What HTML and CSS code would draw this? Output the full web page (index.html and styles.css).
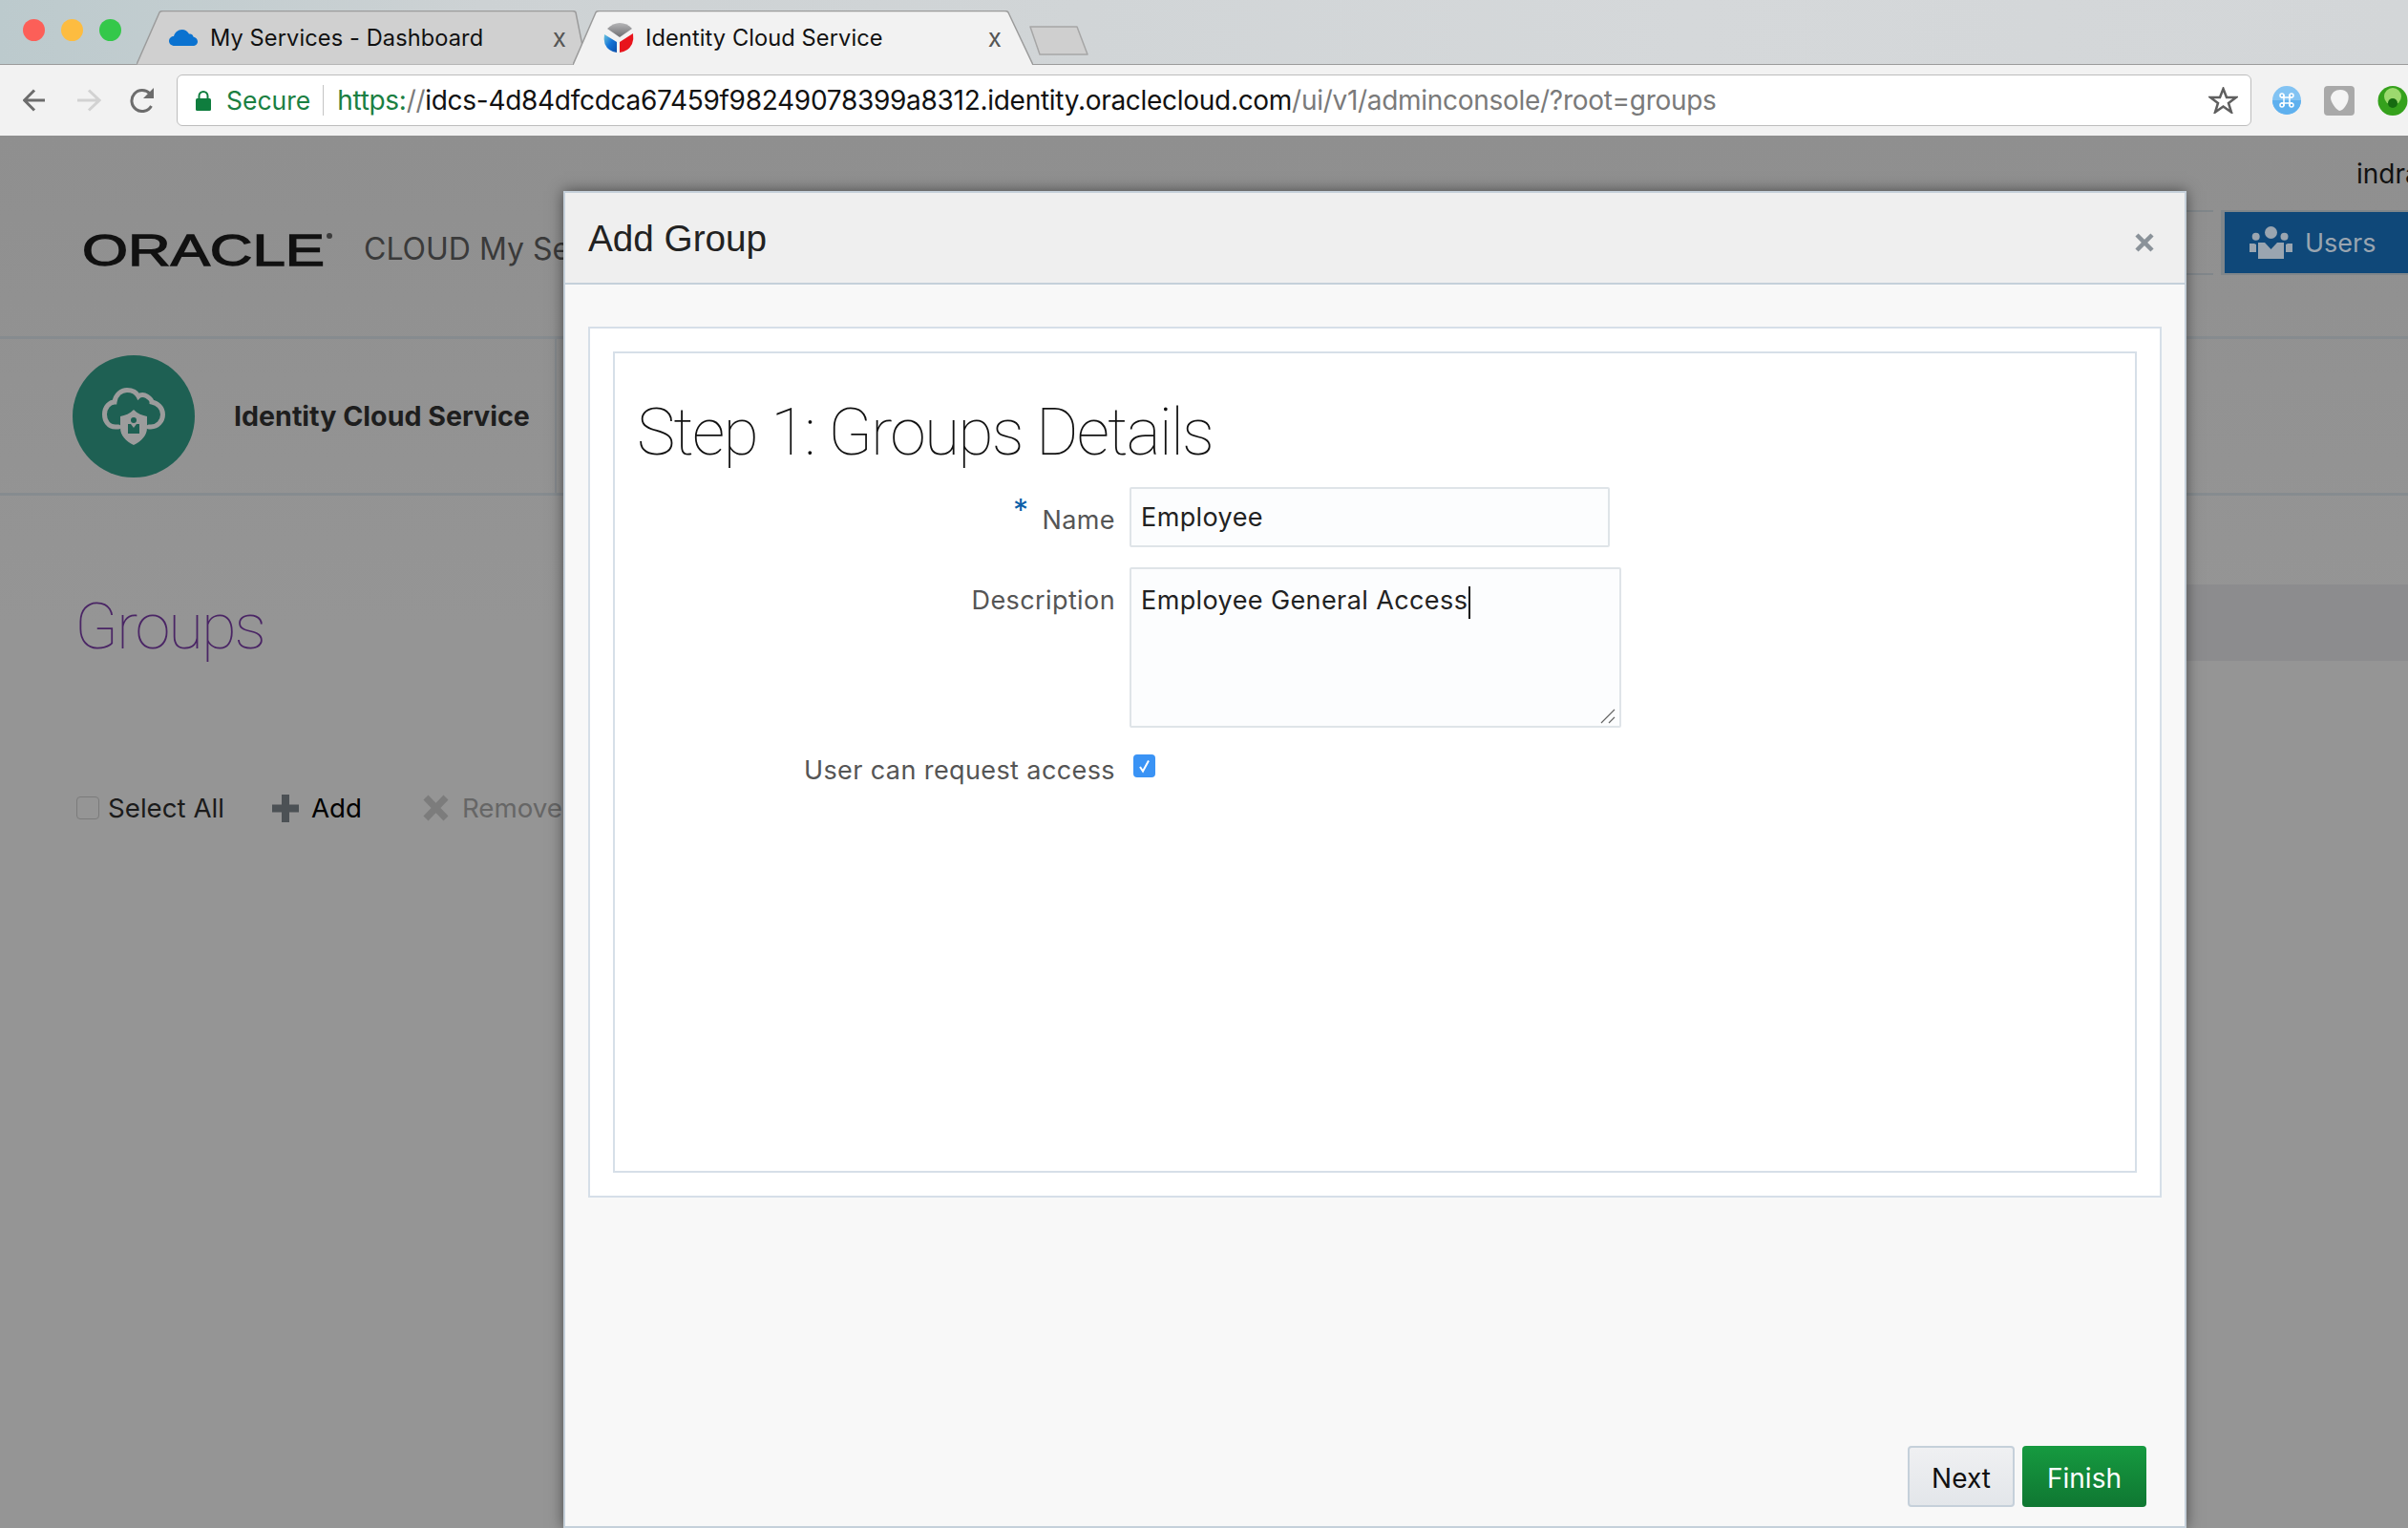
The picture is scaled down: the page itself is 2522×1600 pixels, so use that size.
FILE: index.html
```html
<!DOCTYPE html>
<html lang="en">
<head>
    <meta charset="UTF-8">
    <meta name="viewport" content="width=device-width, initial-scale=1.0">
    <title>Add Group</title>
    <link rel="stylesheet" href="styles.css">
</head>
<body>
    <!-- Browser window chrome -->
    <div class="tabstrip">
        <div class="lights">
            <span class="light light-red"></span>
            <span class="light light-yellow"></span>
            <span class="light light-green"></span>
        </div>
        <div class="tab tab-back">
            <svg class="tab-shape" viewBox="0 0 471 57" preserveAspectRatio="none">
                <path d="M0 56.5 L24 2 Q25 0.5 28 0.5 H456 Q459 0.5 460 2 L471 56.5" fill="#d0d0d0" stroke="#9b9b9b" stroke-width="1.5"/>
            </svg>
            <svg class="tab-icon" width="30" height="17" viewBox="0 0 30 17">
                <path d="M6 17 C2 17 0 14.5 0 12 C0 9 2.5 7 5 7 C6 3 9.500 0 13.500 0 C17 0 19.500 2 21 4.500 C23 4 25 5 25.500 7.500 C28 8 30 10 30 12.500 C30 15 28 17 25 17 Z" fill="#0a72d0"/>
            </svg>
            <span class="tab-title">My Services - Dashboard</span>
            <span class="tab-close">x</span>
        </div>
        <div class="tab tab-active">
            <svg class="tab-shape" viewBox="0 0 482 57" preserveAspectRatio="none">
                <path d="M0 57 L24 2 Q25 0.500 28 0.500 H452 Q455 0.500 456 2 L482 57" fill="#f2f2f2" stroke="#9b9b9b" stroke-width="1.500"/>
            </svg>
            <svg class="tab-icon" width="32" height="32" viewBox="0 0 32 32">
                <defs>
                    <linearGradient id="fav-grey" x1="0" y1="0" x2="0" y2="1">
                        <stop offset="0" stop-color="#b5b5b7"/>
                        <stop offset="1" stop-color="#6f6f72"/>
                    </linearGradient>
                    <linearGradient id="fav-blue" x1="0" y1="0" x2="1" y2="1">
                        <stop offset="0" stop-color="#6cc4dc"/>
                        <stop offset="0.5" stop-color="#1473d6"/>
                        <stop offset="1" stop-color="#0d4fa8"/>
                    </linearGradient>
                </defs>
                <path d="M4 6 Q10 0 17 0 Q25 0 30 6 L17 15 Z" fill="url(#fav-grey)"/>
                <path d="M1 12 L14 20 V31 Q5 30 1.500 22 Q0 17 1 12 Z" fill="url(#fav-blue)"/>
                <path d="M31 11 L17 20 V31 Q26 30 30 22 Q32 17 31 11 Z" fill="#e8141c"/>
            </svg>
            <span class="tab-title">Identity Cloud Service</span>
            <span class="tab-close">x</span>
        </div>
        <svg class="new-tab" width="62" height="31" viewBox="0 0 62 31">
            <path d="M1 1 H50 L61 30 H11 Z" fill="#cfcfcf" stroke="#a6a6a6" stroke-width="1.500" stroke-linejoin="round"/>
        </svg>
    </div>

    <div class="toolbar">
        <svg class="nav nav-back" width="24" height="24" viewBox="0 0 24 24">
            <path d="M23 12 H2 M12 1.500 L1.500 12 L12 22.500" fill="none" stroke="#6c6c6c" stroke-width="3"/>
        </svg>
        <svg class="nav nav-forward" width="26" height="24" viewBox="0 0 26 24">
            <path d="M1 12 H24 M13 1.500 L24 12 L13 22.500" fill="none" stroke="#d2d2d2" stroke-width="3"/>
        </svg>
        <svg class="nav nav-reload" width="28" height="26" viewBox="0 0 28 26">
            <path d="M23.500 19 A11 11 0 1 1 22 6" fill="none" stroke="#6c6c6c" stroke-width="3"/>
            <path d="M26 0 V11 H15 Z" fill="#6c6c6c"/>
        </svg>
        <div class="address">
            <svg class="lock" width="16" height="21" viewBox="0 0 16 21">
                <path d="M3.500 9 V5.500 A4.500 4.500 0 0 1 12.500 5.500 V9" fill="none" stroke="#0f7d3e" stroke-width="2"/>
                <rect x="0" y="8" width="16" height="13" rx="1.500" fill="#0f7d3e"/>
            </svg>
            <span class="secure">Secure</span>
            <span class="address-sep"></span>
            <span class="url"><span class="url-scheme">https:</span><span class="url-path">//</span><span class="url-host">idcs-4d84dfcdca67459f98249078399a8312.identity.oraclecloud.com</span><span class="url-path">/ui/v1/adminconsole/?root=groups</span></span>
            <svg class="star" width="31" height="28" viewBox="0 0 31 28">
                <path d="M15.500 2 L19 11 H29 L21 17 L24 26.500 L15.500 20.500 L7 26.500 L10 17 L2 11 H12 Z" fill="none" stroke="#5f5f5f" stroke-width="2.500"/>
            </svg>
        </div>
        <svg class="ext ext-first" width="30" height="30" viewBox="0 0 30 30">
            <circle cx="15" cy="15" r="15" fill="#82c3f3"/>
            <path d="M0 15 H30 A15 15 0 0 1 0 15 Z" fill="#5fb0ee"/>
            <path d="M12 9 V21 M18 9 V21 M9 12 H21 M9 18 H21" stroke="#fff" stroke-width="1.500"/>
            <g fill="none" stroke="#fff" stroke-width="1.500">
                <circle cx="10" cy="10" r="2"/>
                <circle cx="20" cy="10" r="2"/>
                <circle cx="10" cy="20" r="2"/>
                <circle cx="20" cy="20" r="2"/>
            </g>
        </svg>
        <svg class="ext" width="32" height="31" viewBox="0 0 32 31">
            <rect width="32" height="31" rx="4" fill="#a9a9a9"/>
            <path d="M17 4 C25 4 27 10 25 16 C23 22 19 26 16 26 C12 24 7 17 7 12 C8 7 12 4 17 4 Z" fill="#f4f4f4"/>
        </svg>
        <svg class="ext" width="32" height="31" viewBox="0 0 32 31">
            <circle cx="16" cy="15.500" r="15.500" fill="#35a11c"/>
            <circle cx="16" cy="11" r="9" fill="#9cd96e"/>
            <circle cx="16" cy="18" r="5" fill="#166b10"/>
        </svg>
    </div>

    <!-- Dimmed console behind the dialog -->
    <div class="page">
        <header class="brand-bar">
            <div class="brand">
                <svg class="oracle-logo" width="263" height="50" viewBox="0 0 263 50">
                    <text x="0" y="36" textLength="254" lengthAdjust="spacingAndGlyphs">ORACLE</text>
                    <circle cx="259" cy="5" r="3" fill="#3c3c3c"/>
                </svg>
                <span class="brand-name">CLOUD My Services</span>
            </div>
            <div class="account">
                <div class="user-name">indra</div>
                <div class="nav-buttons">
                    <span class="ghost-button"></span>
                    <span class="users-button">
                        <svg width="45" height="34" viewBox="0 0 45 34">
                            <g fill="#9aa5b0">
                                <circle cx="22.500" cy="6.500" r="6.500"/>
                                <circle cx="6.700" cy="10.700" r="4"/>
                                <circle cx="36.500" cy="10.700" r="4"/>
                                <path d="M9 17 H16 L22.500 24 L29 17 H36 V34 H9 Z"/>
                                <path d="M0 18 H5 L7 19 V27 H0 Z M38 19 L40 18 H45 V27 H38 Z"/>
                            </g>
                        </svg>
                        <span>Users</span>
                    </span>
                </div>
            </div>
        </header>

        <div class="service-bar">
            <div class="service">
                <span class="service-badge">
                    <svg width="66" height="60" viewBox="0 0 66 60">
                        <path d="M17 41 H14 C6 41 2.500 34 2.500 28 C2.500 20 8 15 13 15 C14 7 20 2.500 26 2.500 C32 2.500 36 5 38 9 C40 7 44 7 47 9 C50 11 52 13 52 15 C58 16 63.500 21 63.500 28 C63.500 35 58 41 51 41 H49" fill="none" stroke="#9c9c9c" stroke-width="5" stroke-linecap="round"/>
                        <path d="M33 23 C29 27 24 29 19 30 V42 C19 50 25 56 33 60 C41 56 47 50 47 42 V30 C42 29 37 27 33 23 Z" fill="#9c9c9c"/>
                        <circle cx="33" cy="34" r="3" fill="#1e6053"/>
                        <path d="M27 38 H30 L33 42 L36 38 H39 V48 H27 Z" fill="#1e6053"/>
                    </svg>
                </span>
                <span class="service-name">Identity Cloud Service</span>
            </div>
        </div>

        <main class="groups">
            <div class="groups-head">
                <h2 class="groups-title">Groups</h2>
                <div class="groups-band"></div>
            </div>
            <div class="groups-actions">
                <span class="select-box"></span>
                <span class="action-label select-label">Select All</span>
                <svg class="action-add" width="28" height="29" viewBox="0 0 28 29">
                    <path d="M10 0 H18 V10.500 H28 V18.500 H18 V29 H10 V18.500 H0 V10.500 H10 Z" fill="#4c5155"/>
                </svg>
                <span class="action-label add-label">Add</span>
                <svg class="action-remove" width="27" height="28" viewBox="0 0 27 28">
                    <path d="M3 3 L24 25 M24 3 L3 25" stroke="#7c7c7c" stroke-width="7"/>
                </svg>
                <span class="action-label remove-label">Remove</span>
            </div>
        </main>
    </div>

    <!-- Add Group dialog -->
    <div class="modal">
        <div class="modal-header">
            <h1>Add Group</h1>
            <svg class="modal-close" width="20" height="20" viewBox="0 0 20 20">
                <path d="M2 2 L18 18 M18 2 L2 18" stroke="#8a9299" stroke-width="4.500"/>
            </svg>
        </div>
        <div class="modal-body">
            <div class="outer-panel">
                <div class="inner-panel">
                    <h2 class="step-title">Step 1: Groups Details</h2>
                    <div class="form">
                        <div class="form-label"><span class="required">*</span>Name</div>
                        <div class="text-input">Employee</div>
                        <div class="form-label">Description</div>
                        <div class="text-area">
                            Employee General Access<span class="caret"></span>
                            <svg class="resize-grip" width="16" height="16" viewBox="0 0 16 16">
                                <path d="M1 15 L15 1 M9 15 L15 9" stroke="#666" stroke-width="1.200"/>
                            </svg>
                        </div>
                        <div class="form-label label-check">User can request access</div>
                        <div class="check-cell">
                            <svg width="23" height="24" viewBox="0 0 23 24">
                                <rect width="23" height="24" rx="4" fill="#3a93f5"/>
                                <path d="M7 13 L10 17.500 L16 6.500" fill="none" stroke="#fff" stroke-width="2"/>
                            </svg>
                        </div>
                    </div>
                </div>
            </div>
            <div class="modal-footer">
                <button class="btn btn-next">Next</button>
                <button class="btn btn-finish">Finish</button>
            </div>
        </div>
    </div>
</body>
</html>
```

FILE: styles.css
```css
body {
    margin: 0;
    width: 2522px;
    height: 1600px;
    overflow: hidden;
    position: relative;
    font-family: "Inter", "Liberation Sans", sans-serif;
    background-color: #959595;
}

h1, h2 {
    margin: 0;
    font-weight: normal;
}

/* Tab strip */
.tabstrip {
    display: flex;
    height: 67px;
    border-bottom: 1px solid #9b9b9b;
    background: linear-gradient(90deg, #bccacd 0%, #cdd2d4 20%, #d5d8da 70%, #d3d6d8 100%);
    box-sizing: content-box;
}

.lights {
    display: flex;
    gap: 17px;
    padding: 20px 0 0 24px;
}

.light {
    width: 23px;
    height: 23px;
    border-radius: 50%;
}

.light-red { background-color: #fc5f58; }
.light-yellow { background-color: #fdbc40; }
.light-green { background-color: #34c84a; }

.tab {
    position: relative;
    display: flex;
    align-items: center;
    margin-top: 11px;
    height: 57px;
    box-sizing: border-box;
    font-size: 23.6px;
    color: #111;
}

.tab-shape {
    position: absolute;
    left: 0;
    top: 0;
    width: 100%;
    height: 100%;
}

.tab-icon, .tab-title, .tab-close {
    position: relative;
}

.tab-back {
    width: 471px;
    margin-left: 16px;
    padding-left: 34px;
}

.tab-active {
    width: 482px;
    margin-left: -14px;
    padding-left: 32px;
    z-index: 2;
}

.tab-title {
    margin-left: 13px;
    letter-spacing: 0.1px;
    white-space: nowrap;
}

.tab-active .tab-title {
    margin-left: 12px;
}

.tab-close {
    margin-left: auto;
    font-size: 26px;
    color: #555;
}

.tab-back .tab-close { margin-right: 21px; }
.tab-active .tab-close { margin-right: 33px; }

.new-tab {
    margin: 27px 0 0 -4px;
}

/* Address toolbar */
.toolbar {
    display: flex;
    align-items: center;
    height: 74px;
    padding-left: 24px;
    background-color: #f2f2f2;
}

.nav-forward { margin-left: 32px; }
.nav-reload { margin-left: 29px; }

.address {
    display: flex;
    align-items: center;
    width: 2175px;
    height: 54px;
    margin-left: 22px;
    padding-left: 19px;
    box-sizing: border-box;
    border: 1.5px solid #bdbdbd;
    border-radius: 6px;
    background-color: #fff;
    font-size: 28px;
    white-space: nowrap;
}

.secure {
    margin-left: 16px;
    font-size: 26.500px;
    color: #1a7f42;
}

.address-sep {
    width: 1px;
    height: 32px;
    margin-left: 13px;
    background-color: #c4c4c4;
}

.url {
    margin-left: 14px;
    letter-spacing: -0.29px;
}

.url-scheme { color: #1a7f42; }
.url-host { color: #111; }
.url-path { color: #7a7a7a; }

.star {
    margin-left: auto;
    margin-right: 13px;
}

.ext { margin-left: 24px; }
.ext-first { margin-left: 22px; }

/* Page behind the modal */
.page {
    height: 1458px;
    background: linear-gradient(180deg, #8f8f8f 0%, #959595 35%);
}

.brand-bar {
    display: flex;
    height: 210px;
    border-bottom: 3px solid #868b8f;
}

.brand {
    display: flex;
    align-items: flex-start;
    height: 50px;
    margin: 100px 0 0 86px;
}

.oracle-logo {
    overflow: visible;
}

.oracle-logo text {
    font-family: "Liberation Sans", sans-serif;
    font-size: 46px;
    fill: #111;
    stroke: #111;
    stroke-width: 1.300px;
}

.brand-name {
    margin-left: 32px;
    font-size: 32px;
    line-height: 38px;
    color: #3a3a3a;
    white-space: nowrap;
}

.account {
    width: 322px;
    margin-left: auto;
    padding-top: 20px;
    overflow: hidden;
}

.user-name {
    padding-left: 268px;
    font-size: 28px;
    line-height: 40px;
    color: #111;
    white-space: nowrap;
}

.nav-buttons {
    display: flex;
    margin-top: 18px;
    height: 68px;
}

.ghost-button {
    width: 118px;
    box-sizing: border-box;
    border-top: 2px solid #80868a;
    border-bottom: 2px solid #80868a;
}

.users-button {
    display: flex;
    align-items: center;
    flex: 1;
    margin-left: 8px;
    padding-left: 26px;
    border: solid #80868a;
    border-width: 2px 0 2px 4px;
    background-color: #0f4879;
    color: #9aa5b0;
    font-size: 27px;
}

.users-button span {
    margin-left: 13px;
}

.service-bar {
    display: flex;
    height: 161px;
    border-bottom: 3px solid #868b8f;
}

.service {
    display: flex;
    align-items: center;
    width: 505px;
    padding-left: 76px;
    border-right: 2px solid #868a8e;
}

.service-badge {
    display: flex;
    align-items: center;
    justify-content: center;
    width: 128px;
    height: 128px;
    border-radius: 50%;
    background-color: #1e6053;
}

.service-name {
    margin-left: 41px;
    font-size: 28.600px;
    font-weight: bold;
    color: #1e1e1e;
    white-space: nowrap;
}

.groups {
    padding-top: 93px;
}

.groups-head {
    display: flex;
    height: 80px;
}

.groups-title {
    padding-left: 78px;
    font-family: "Roboto", sans-serif;
    font-weight: 100;
    font-size: 67px;
    line-height: 88px;
    letter-spacing: -2.100px;
    color: #4a2565;
}

.groups-band {
    flex: 1;
    margin-left: 500px;
    background-color: #8c8c8e;
}

.groups-actions {
    display: flex;
    align-items: center;
    height: 30px;
    margin-top: 139px;
    padding-left: 80px;
}

.select-box {
    width: 24px;
    height: 24px;
    box-sizing: border-box;
    border: 1.5px solid #7b7b7b;
    border-radius: 4px;
}

.action-label {
    font-size: 27.700px;
    color: #1b1b1b;
}

.select-label { margin-left: 9px; }
.action-add { margin-left: 50px; }
.add-label { margin-left: 13px; color: #000; }
.action-remove { margin-left: 64px; }
.remove-label { margin-left: 14px; color: #666; }

/* Modal */
.modal {
    position: absolute;
    left: 590px;
    top: 200px;
    display: flex;
    flex-direction: column;
    width: 1700px;
    height: 1400px;
    box-sizing: border-box;
    border: 2px solid #c5d0da;
    box-shadow: 0 0 14px rgba(0, 0, 0, 0.5);
    background-color: #f8f8f8;
}

.modal-header {
    display: flex;
    align-items: center;
    justify-content: space-between;
    height: 96px;
    box-sizing: border-box;
    padding: 0 32px 0 24px;
    border-bottom: 2px solid #c5d0da;
    background-color: #efefef;
}

.modal-header h1 {
    margin-top: 2px;
    font-family: "Liberation Sans", sans-serif;
    font-size: 38.700px;
    color: #222;
}

.modal-close {
    margin-top: 9px;
}

.modal-body {
    flex: 1;
    display: flex;
    flex-direction: column;
    padding: 44px 24px 20px 24px;
}

.outer-panel {
    height: 912px;
    box-sizing: border-box;
    padding: 24px;
    border: 2px solid #d6dfe8;
    background-color: #fff;
}

.inner-panel {
    height: 100%;
    box-sizing: border-box;
    border: 2px solid #d6dfe8;
}

.step-title {
    padding: 45px 0 0 23px;
    margin-bottom: 19px;
    font-family: "Roboto", sans-serif;
    font-weight: 100;
    font-size: 68px;
    line-height: 76px;
    letter-spacing: -1.850px;
    color: #111;
}

.form {
    display: grid;
    grid-template-columns: 524px auto;
    column-gap: 15px;
    justify-content: start;
    font-size: 27px;
    letter-spacing: 0.4px;
}

.form-label {
    text-align: right;
    padding-top: 18px;
    color: #555;
    white-space: nowrap;
}

.required {
    margin-right: 14px;
    font-size: 32px;
    line-height: 0;
    color: #0b5fa8;
    vertical-align: 8px;
}

.text-input, .text-area {
    box-sizing: border-box;
    border: 2px solid #dfe4e8;
    border-radius: 2px;
    background-color: #fcfdfe;
    color: #222;
    padding: 0 10px;
}

.text-input {
    width: 503px;
    height: 63px;
    line-height: 60px;
    margin-bottom: 21px;
}

.text-area {
    position: relative;
    width: 515px;
    height: 168px;
    padding-top: 17px;
    line-height: 32px;
    margin-bottom: 26px;
}

.caret {
    display: inline-block;
    width: 2px;
    height: 34px;
    margin-left: 1px;
    vertical-align: middle;
    background-color: #111;
}

.resize-grip {
    position: absolute;
    right: 4px;
    bottom: 2px;
}

.label-check {
    padding-top: 2px;
}

.check-cell {
    padding-left: 4px;
}

.modal-footer {
    display: flex;
    justify-content: flex-end;
    gap: 8px;
    margin-top: auto;
    padding-right: 16px;
}

.btn {
    height: 64px;
    box-sizing: border-box;
    border-radius: 4px;
    font-family: "Inter", "Liberation Sans", sans-serif;
    font-size: 28px;
    padding: 4px 0 0;
}

.btn-next {
    width: 112px;
    border: 2px solid #c5d0da;
    background: linear-gradient(180deg, #eff0f2, #e3e6ea);
    color: #111;
}

.btn-finish {
    width: 130px;
    border: none;
    background: linear-gradient(180deg, #169a40, #0f7732);
    color: #fff;
}
```
